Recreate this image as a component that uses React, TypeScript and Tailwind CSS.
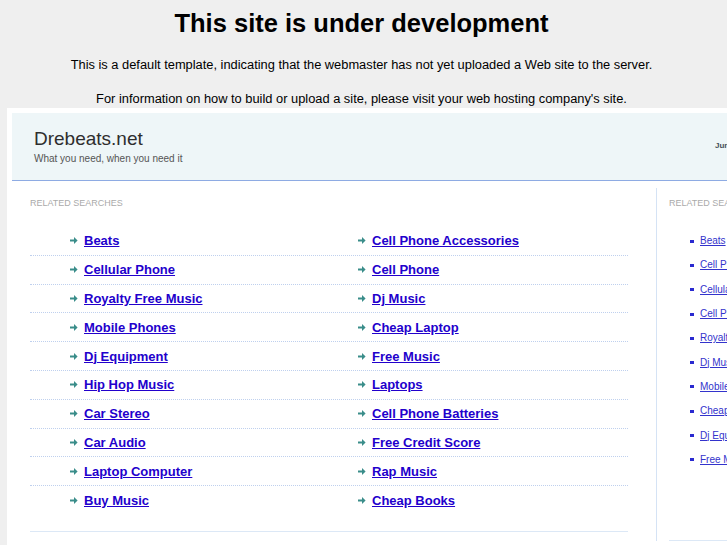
const leftLinks: [string, string][] = [
  ['Beats', 'Cell Phone Accessories'],
  ['Cellular Phone', 'Cell Phone'],
  ['Royalty Free Music', 'Dj Music'],
  ['Mobile Phones', 'Cheap Laptop'],
  ['Dj Equipment', 'Free Music'],
  ['Hip Hop Music', 'Laptops'],
  ['Car Stereo', 'Cell Phone Batteries'],
  ['Car Audio', 'Free Credit Score'],
  ['Laptop Computer', 'Rap Music'],
  ['Buy Music', 'Cheap Books'],
]

const rightLinks = [
  'Beats',
  'Cell Phone Accessories',
  'Cellular Phone',
  'Cell Phone',
  'Royalty Free Music',
  'Dj Music',
  'Mobile Phones',
  'Cheap Laptop',
  'Dj Equipment',
  'Free Music',
]

function Arrow() {
  return (
    <svg width="8" height="7" viewBox="0 0 8 7" className="mr-[6px] shrink-0">
      <path d="M0 2.6h4V0l3.6 3.5L4 7V4.4H0z" fill="#3a8d8a" />
    </svg>
  )
}

function LinkCell({ label }: { label: string }) {
  return (
    <div className="flex items-center pl-[40px]">
      <Arrow />
      <a href="#" className="text-[13px] leading-[15px] font-bold text-[#2200cc] underline">
        {label}
      </a>
    </div>
  )
}

export default function App() {
  return (
    <div className="w-[727px] h-[545px] overflow-hidden bg-[#efefef] text-black font-['Liberation_Sans',Arial,sans-serif]">
      <div className="pt-[9px] pr-[4px] text-center">
        <h1 className="text-[25.5px] leading-[29px] font-bold">This site is under development</h1>
        <p className="mt-[19px] text-[12.85px] leading-[15px]">
          This is a default template, indicating that the webmaster has not yet uploaded a Web site to the server.
        </p>
        <p className="mt-[19px] text-[12.85px] leading-[15px]">
          For information on how to build or upload a site, please visit your web hosting company's site.
        </p>
      </div>

      <div className="mt-[2px] ml-[7px] w-[820px] bg-white px-[5px] pt-[5px] pb-[40px]">
        <div className="flex h-[68px] border-b border-[#8eabe3] bg-[#eef6f8]">
          <div className="w-[703px] pl-[22px] pt-[15px]">
            <div className="text-[19px] leading-[22px] text-[#2e2e2e]">Drebeats.net</div>
            <div className="mt-[3px] text-[10px] leading-[12px] text-[#555]">What you need, when you need it</div>
          </div>
          <div className="pt-[28px] text-[8px] leading-[10px] font-bold text-[#46505a] whitespace-nowrap">
            June 2011
          </div>
        </div>

        <div className="flex">
          <div className="w-[644px] shrink-0 pl-[18px] pr-[28px] pt-[17px]">
            <div className="text-[9px] leading-[11px] text-[#aaa] uppercase">Related Searches</div>
            <div className="mt-[18px] pb-[16px] border-b border-[#dce8f6]">
              {leftLinks.map(([a, b], i) => (
                <div
                  key={a}
                  className={
                    'grid grid-cols-[288px_1fr] items-center h-[28.8px] ' +
                    (i < leftLinks.length - 1 ? 'border-b border-dotted border-[#bfd0ee]' : '')
                  }
                >
                  <LinkCell label={a} />
                  <LinkCell label={b} />
                </div>
              ))}
            </div>
          </div>

          <div className="mt-[7px] flex-1 border-l border-[#d5e3f5] pl-[12px] pt-[10px]">
            <div className="text-[9px] leading-[11px] text-[#aaa] uppercase whitespace-nowrap">Related Searches</div>
            <div className="mt-[20px] h-[312px] border-b border-[#dce8f6]">
              {rightLinks.map((l) => (
                <div key={l} className="flex items-center h-[24.3px] pl-[21px] whitespace-nowrap">
                  <span className="mr-[6px] h-[3px] w-[4px] bg-[#2a2ad0]" />
                  <a href="#" className="text-[10px] leading-[12px] text-[#3333cc] underline">
                    {l}
                  </a>
                </div>
              ))}
            </div>
          </div>
        </div>
      </div>
    </div>
  )
}
